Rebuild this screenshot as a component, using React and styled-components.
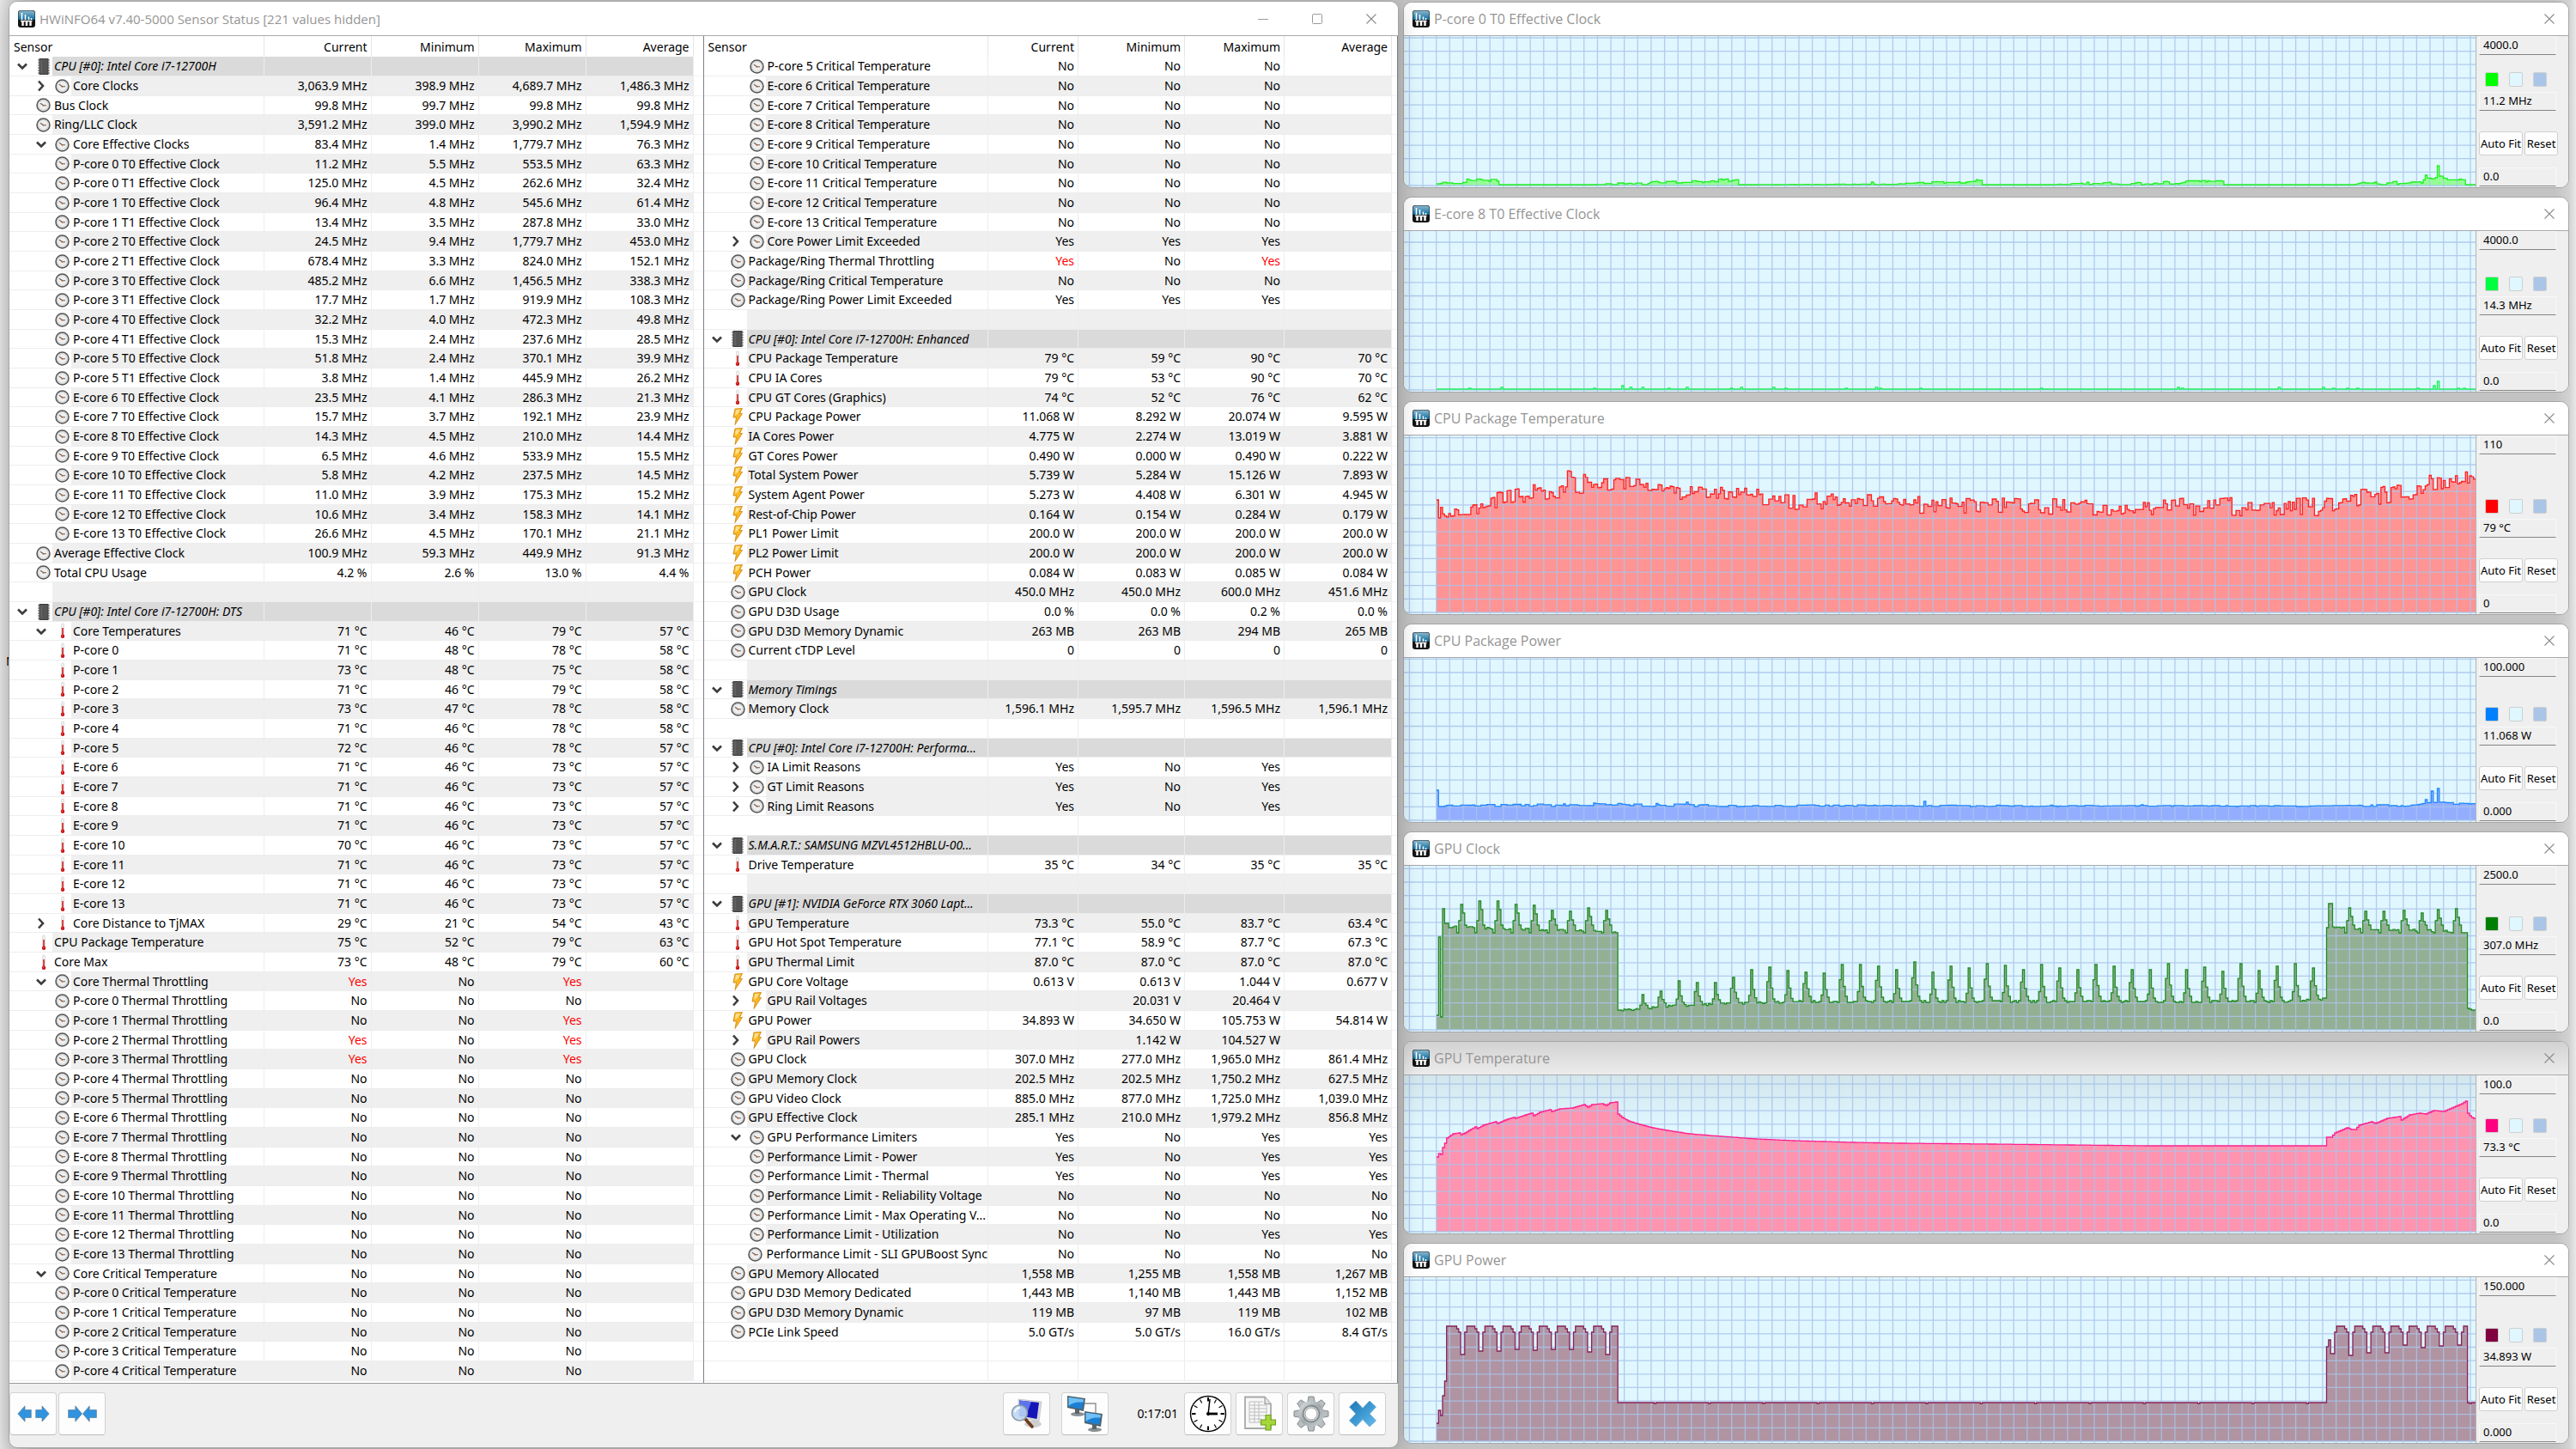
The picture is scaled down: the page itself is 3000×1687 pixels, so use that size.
import styled, { createGlobalStyle, css } from "styled-components";

const GlobalStyle = createGlobalStyle`
  * {
    box-sizing: border-box;
  }
  body {
    margin: 0;
    background: #e4e4e4;
    color: #000;
    font-family: "Noto Sans", Tahoma, sans-serif;
    font-size: 14px;
    line-height: 20px;
  }
  button,
  input {
    font: inherit;
    color: inherit;
    margin: 0;
  }
`;

const Desktop = styled.div`
  position: relative;
  min-height: 100vh;
  padding: 1px 8px 1px 10px;
  display: grid;
  grid-template-columns: 1619fr 1358fr;
  gap: 5px;
  align-items: start;
  background: linear-gradient(
    to right,
    #e6e6e6,
    #dadada 10px,
    #c3c3c3 40px,
    #c3c3c3 calc(100% - 24px),
    #d2d2d2 calc(100% - 8px),
    #e8e8e8
  );
`;
const DesktopLabel = styled.span`
  position: absolute;
  left: 7px;
  top: 760px;
`;

const Window = styled.section`
  position: relative;
  border: 1px solid #a6a6a6;
  border-radius: 10px;
  overflow: hidden;
  background: #efefef;
`;
const MainWindow = styled(Window)`
  z-index: 1;
  box-shadow: 0 4px 26px rgba(0, 0, 0, 0.22);
`;
const TitleBar = styled.header`
  height: ${(p) => p.$height}px;
  padding-left: 10px;
  display: flex;
  align-items: center;
  gap: 5px;
  background: ${(p) => (p.$shaded ? "linear-gradient(#d2d2d2, #ececec)" : "#fff")};
`;
const Title = styled.h1`
  flex: 1;
  margin: 0;
  font-family: "Open Sans", "Segoe UI", sans-serif;
  font-size: ${(p) => p.$size}px;
  font-weight: 400;
  line-height: 22px;
  color: #959595;
  white-space: nowrap;
`;
const CaptionButton = styled.button`
  width: ${(p) => p.$width}px;
  align-self: stretch;
  padding: 0;
  border: 0;
  background: none;
  display: flex;
  align-items: center;
  justify-content: center;
`;
const CaptionButtons = styled.div`
  display: flex;
  align-self: stretch;
`;

const Panes = styled.div`
  display: grid;
  grid-template-columns: 1fr 1fr;
  border-top: 1px solid #a9a9ad;
  border-bottom: 1px solid #98989e;
  background: #fff;
`;
const Pane = styled.div`
  padding-bottom: 2px;
  border-right: 1px solid #80808a;
`;
const Table = styled.table`
  width: 100%;
  table-layout: fixed;
  border-collapse: separate;
  border-spacing: 0;
`;
const Col = styled.col`
  width: ${(p) => p.$width}px;
`;
const Th = styled.th`
  height: 24px;
  padding: 2px 4px 0 5px;
  font-weight: 400;
  text-align: ${(p) => (p.$first ? "left" : "right")};
  border-right: 1px solid #e6e6e6;
`;

const rowBack = { dark: "#dadada", gray: "#efefef", white: "#fff" };

const Td = styled.td`
  height: 100%;
  padding: 0 4px 0 0;
  text-align: right;
  white-space: nowrap;
  color: ${(p) => (p.$alert ? "#f00" : "#000")};
  border-right: 1px solid #ededed;
  border-bottom: 1px solid #ededed;
`;
const SensorTd = styled.td`
  padding: 0;
  text-align: left;
  border-right: 1px solid #ededed;
  border-bottom: 1px solid #ededed;
`;
const EndTd = styled.td`
  padding: 0;
  border-bottom: 1px solid #f2f2f2;
`;
// every third row is one pixel shorter
const Tr = styled.tr`
  height: 23px;
  &:nth-child(3n) {
    height: 22px;
  }
  ${Td} {
    background: ${(p) => rowBack[p.$tone]};
  }
  ${SensorTd} {
    background: linear-gradient(
      to right,
      #fff ${(p) => p.$indent}px,
      ${(p) => rowBack[p.$tone]} ${(p) => p.$indent}px
    );
  }
`;
const Sensor = styled.div`
  display: flex;
  align-items: center;
  height: 20px;
  padding-left: ${(p) => (p.$level === 2 ? 28 : 6)}px;
  white-space: nowrap;
  font-style: ${(p) => (p.$group ? "italic" : "normal")};
`;
const Expander = styled.button`
  width: 18px;
  height: 18px;
  padding: 0;
  margin-right: 7px;
  border: 0;
  background: none;
  display: flex;
  align-items: center;
  justify-content: center;
`;
const ExpanderSpace = styled.span`
  width: 25px;
`;
const IconSlot = styled.span`
  width: 17px;
  height: 20px;
  margin-right: 4px;
  display: flex;
  align-items: center;
  justify-content: center;
`;

const Toolbar = styled.footer`
  display: flex;
  align-items: center;
  padding: 10px 14px 14px 0;
`;
const ToolGroup = styled.div`
  display: flex;
  align-items: center;
  gap: ${(p) => p.$gap}px;
`;
const ToolButton = styled.button`
  width: 55px;
  height: 50px;
  padding: 0;
  border: 1px solid #d2d2d2;
  border-bottom-color: #bdbdbd;
  border-radius: 4px;
  background: #fdfdfd;
  display: flex;
  align-items: center;
  justify-content: center;
`;
const Elapsed = styled.time`
  margin: 0 7px 0 33px;
`;
const Spacer = styled.div`
  flex: 1;
`;

const Charts = styled.div`
  padding-top: 1px;
  display: flex;
  flex-direction: column;
  gap: 10px;
`;
const ChartBody = styled.div`
  display: flex;
  height: ${(p) => p.$height}px;
  border-top: 1px solid #a9a9ad;
`;
const Plot = styled.div`
  flex: 1;
  min-width: 0;
  background: #e0f7ff;
  border-right: 1px solid #b5b5b5;
  svg {
    display: block;
    width: 100%;
    height: 100%;
  }
  ${(p) =>
    p.$shaded &&
    css`
      background: linear-gradient(#d2e6ec, #e0f7ff 60px);
    `}
`;
const Side = styled.div`
  width: 107px;
  padding: 0 0 1px 3px;
  display: flex;
  flex-direction: column;
  background: #efefef;
  font-size: 13px;
`;
const Field = styled.input`
  width: 90px;
  height: 22px;
  padding: 0 4px 3px;
  border: 1px solid #f8f8f8;
  border-bottom: 1px solid #858585;
  border-radius: 0;
  background: #efefef;
  outline: none;
`;
const Swatches = styled.div`
  display: flex;
  gap: 12px;
  margin: auto 0 6px 7px;
`;
const Swatch = styled.button`
  width: 16px;
  height: 17px;
  padding: 0;
  border: 1px solid #cfcfcf;
  border-radius: 2px;
  background: ${(p) => p.$color};
`;
const ChartActions = styled.div`
  display: flex;
  gap: 2px;
  margin: 24px 0 14px;
`;
const ChartButton = styled.button`
  width: ${(p) => p.$width}px;
  height: 28px;
  padding: 0;
  border: 1px solid #d0d0d0;
  border-radius: 3px;
  background: #fdfdfd;
  white-space: nowrap;
`;

const AppIcon = () => (
  <svg width="20" height="20" viewBox="0 0 20 20">
    <defs>
      <linearGradient id="appTop" x1="0" y1="0" x2="0" y2="1">
        <stop offset="0" stopColor="#8cb9cf" />
        <stop offset="1" stopColor="#0b6b9f" />
      </linearGradient>
    </defs>
    <rect width="20" height="20" rx="3" fill="#141414" />
    <path d="M.5 11V3.500a3 3 0 0 1 3-3h13a3 3 0 0 1 3 3V11z" fill="url(#appTop)" />
    <path d="M4.500 3v8M8.500 5v6M12.500 7.500V11M15.500 9v2" stroke="#fff" strokeWidth="1.600" />
    <path d="M3 12.500h13.500" stroke="#fff" strokeWidth="1.400" />
    <path d="M5.500 12v6M10 12v6M14.500 12v6" stroke="#fff" strokeWidth="2.400" />
  </svg>
);
const CloseIcon = () => (
  <svg width="12" height="12" viewBox="0 0 12 12" stroke="#8c8c8c" strokeWidth="1.100">
    <path d="M.5.5l11 11M11.500.5l-11 11" />
  </svg>
);
const MinimizeIcon = () => (
  <svg width="12" height="12" viewBox="0 0 12 12" stroke="#9a9a9a">
    <path d="M0 6.500h12" />
  </svg>
);
const MaximizeIcon = () => (
  <svg width="12" height="12" viewBox="0 0 12 12" stroke="#9a9a9a" fill="none">
    <rect x=".5" y=".5" width="11" height="11" rx="1" />
  </svg>
);
const Arrow = ({ open }) => (
  <svg width="14" height="14" viewBox="0 0 14 14" fill="none" stroke="#3c3c3c" strokeWidth="2.600">
    <path d={open ? "M2 4.500l5 5 5-5" : "M4 1.500l5 5.500-5 5.500"} />
  </svg>
);

const ClockIcon = () => (
  <svg width="17" height="17" viewBox="0 0 17 17">
    <circle cx="8.500" cy="8.500" r="7.500" fill="#e6e6e6" stroke="#545454" strokeWidth="1.500" />
    <circle cx="8.500" cy="8.500" r="5.800" fill="#efefef" stroke="#c4c4c4" strokeWidth=".8" />
    <path d="M5 6.200l3.500 2.600h3.500" fill="none" stroke="#6a5d55" strokeWidth="1.100" />
    <circle cx="8.500" cy="8.800" r="1" fill="#b5643c" />
  </svg>
);
const ThermoIcon = () => (
  <svg width="10" height="19" viewBox="0 0 10 19">
    <rect x="3.500" y=".8" width="3" height="14" rx="1.500" fill="#efefef" stroke="#cfcfcf" strokeWidth=".6" />
    <rect x="4.200" y="6" width="1.600" height="9" fill="#d42020" />
    <circle cx="5" cy="15.800" r="2.200" fill="#cc1010" />
    <circle cx="4.400" cy="15.200" r=".6" fill="#f08080" />
  </svg>
);
const BoltIcon = () => (
  <svg width="15" height="20" viewBox="0 0 15 20">
    <path d="M4 1l8.500-.5-3 6h3L4 19.500l1.500-8.500H2z" fill="#fbb823" stroke="#c9820e" strokeWidth=".8" />
    <path d="M5 2.200l5-.4-2.500 4.700L4 9z" fill="#ffe08a" />
  </svg>
);
const ChipIcon = () => (
  <svg width="16" height="19" viewBox="0 0 16 19">
    <path d="M1 2h14M1 5h14M1 8h14M1 11h14M1 14h14M1 17h14" stroke="#9a9a9a" strokeWidth="1.400" />
    <rect x="3" y=".5" width="10" height="18" fill="#555" stroke="#3e3e3e" />
    <path d="M5 2v15" stroke="#707070" />
  </svg>
);
const icons = { clock: ClockIcon, thermo: ThermoIcon, bolt: BoltIcon, chip: ChipIcon };

const ExpandIcon = () => (
  <svg width="42" height="20" viewBox="0 0 42 22" fill="#2f93e0" stroke="#5f7f99" strokeWidth=".8">
    <path d="M1 11L10 1v5h8v10h-8v5z" />
    <path d="M41 11L32 1v5h-8v10h8v5z" />
  </svg>
);
const CollapseIcon = () => (
  <svg width="38" height="20" viewBox="0 0 38 22" fill="#2f93e0" stroke="#5f7f99" strokeWidth=".8">
    <path d="M18.500 11L10 1v5H1v10h9v5z" />
    <path d="M19.500 11L28 1v5h9v10h-9v5z" />
  </svg>
);
const Screen = ({ x, y }) => (
  <g transform={`translate(${x} ${y})`}>
    <ellipse cx="12" cy="21.500" rx="8" ry="2.500" fill="#8b9094" />
    <path d="M9 15l5 1v5H9z" fill="#5d6468" />
    <path d="M0 0l21 3-2 15L0 14z" fill="#51626c" />
    <path d="M1.500 1.800l17.500 2.500-1.600 11.500L1.500 12.500z" fill="#1c7fd6" />
    <path d="M1.500 1.800l17.500 2.500-.6 3.500C10 7 5 9 1.500 12z" fill="#6fc0f5" />
  </g>
);
const FindIcon = () => (
  <svg width="38" height="38" viewBox="0 0 38 38">
    <ellipse cx="26" cy="31" rx="10" ry="4" fill="#cfcfcf" />
    <path d="M9 2l27 3-3 23-24-5z" fill="#d8d8dc" stroke="#b5b5b5" strokeWidth=".6" />
    <path d="M10 3.500l23 2.500-2.500 19L10 21z" fill="#1414b8" />
    <path d="M10 3.500l14 1.500-6 17-8-2z" fill="#5b74ee" />
    <path d="M17 25l8 9" stroke="#6b3a1c" strokeWidth="3.600" strokeLinecap="round" />
    <circle cx="10.500" cy="18" r="9" fill="#bcd6f3" fillOpacity=".85" stroke="#8d9aa6" strokeWidth="1.600" />
    <path d="M5 17a6 6 0 0 1 6-5" fill="none" stroke="#fff" strokeWidth="1.800" />
  </svg>
);
const NetworkIcon = () => (
  <svg width="44" height="42" viewBox="0 0 44 42">
    <path d="M20 9h14v13" fill="none" stroke="#8e8e8e" strokeWidth="1.400" />
    <Screen x={1} y={0} />
    <Screen x={21} y={18} />
  </svg>
);
const WallClockIcon = () => (
  <svg width="44" height="44" viewBox="0 0 44 44" stroke="#000">
    <circle cx="22" cy="22" r="20.500" fill="#fff" strokeWidth="1.400" />
    {[...Array(12)].map((_, i) => (
      <path
        key={i}
        d="M22 3v4.500"
        strokeWidth={i % 3 ? 1.2 : 2}
        transform={`rotate(${i * 30} 22 22)`}
      />
    ))}
    <path d="M22 23L24 5" strokeWidth="1.500" />
    <path d="M21 22h12" strokeWidth="2.800" />
    <circle cx="22" cy="22" r="1.600" />
  </svg>
);
const LogIcon = () => (
  <svg width="40" height="42" viewBox="0 0 40 42">
    <path d="M3 1.500h23l7 8V38H3z" fill="#f7f7f7" stroke="#a8a8a8" strokeWidth="1.800" />
    <path d="M26 1.500V9.500h7" fill="#e3e3e3" stroke="#a8a8a8" strokeWidth="1.400" />
    <path
      d="M8 7h16M8 11h20M8 15h20M8 19h20M8 23h20M8 27h14M8 31h14M8 7v24M14 7v24M19 7v24M28 11v10"
      stroke="#bcbcbc"
      fill="none"
    />
    <path
      d="M27 22.500h6v5.500h5.500v6H33V40h-6v-6h-5.500v-6H27z"
      fill="#a5d63a"
      stroke="#6fa01c"
      strokeWidth="1.100"
    />
  </svg>
);
const GearIcon = () => (
  <svg width="42" height="42" viewBox="0 0 42 42">
    <defs>
      <linearGradient id="gear" x1="0" y1="0" x2="1" y2="1">
        <stop offset="0" stopColor="#dfe3e4" />
        <stop offset=".5" stopColor="#a2a9ac" />
        <stop offset="1" stopColor="#ccd1d3" />
      </linearGradient>
    </defs>
    <g fill="#b9bfc1" stroke="#7b8184" strokeWidth=".9">
      {[...Array(8)].map((_, i) => (
        <path key={i} d="M16.500 9l1.500-8h6l1.500 8z" transform={`rotate(${i * 45} 21 21)`} />
      ))}
      <circle cx="21" cy="21" r="15" fill="url(#gear)" stroke="none" />
    </g>
    <circle cx="21" cy="21" r="9.500" fill="#d5d9da" stroke="#83898c" strokeWidth="1.800" />
    <circle cx="21" cy="21" r="7" fill="#fdfdfd" stroke="#9ba0a3" />
  </svg>
);
const ExitIcon = () => (
  <svg width="34" height="34" viewBox="0 0 34 34">
    <defs>
      <linearGradient id="exit" x1="0" y1="0" x2="1" y2="1">
        <stop offset="0" stopColor="#1b76b4" />
        <stop offset="1" stopColor="#62bdf0" />
      </linearGradient>
    </defs>
    <path
      d="M9 2l8 8.500L25 2l7.500 7L25 17l7.500 8-7.500 7-8-8.500L9 32l-7.500-7L9 17 1.500 9z"
      fill="url(#exit)"
      stroke="#6aa5cc"
      strokeWidth=".8"
    />
  </svg>
);

const group = (label) => ({ group: true, level: 0, icon: "chip", label, values: [], open: true });
const blank = { blank: true, level: 0, values: [] };
const row = (level, icon, label, values, open) => ({
  level,
  icon,
  label,
  open,
  values: values.split("|"),
});
const withUnit = (values, unit) =>
  values
    .split(" ")
    .map((v) => `${v} ${unit}`)
    .join("|");
const clock = (level, label, values, open) => row(level, "clock", label, withUnit(values, "MHz"), open);
const temp = (level, label, values, open) => row(level, "thermo", label, withUnit(values, "°C"), open);
const power = (label, values, unit = "W") => row(1, "bolt", label, withUnit(values, unit));
const flags = (level, label, values, open) => row(level, "clock", label, values, open);

const leftRows = [
  group("CPU [#0]: Intel Core i7-12700H"),
  clock(2, "Core Clocks", "3,063.9 398.9 4,689.7 1,486.3", false),
  clock(1, "Bus Clock", "99.8 99.7 99.8 99.8"),
  clock(1, "Ring/LLC Clock", "3,591.2 399.0 3,990.2 1,594.9"),
  clock(2, "Core Effective Clocks", "83.4 1.4 1,779.7 76.3", true),
  clock(2, "P-core 0 T0 Effective Clock", "11.2 5.5 553.5 63.3"),
  clock(2, "P-core 0 T1 Effective Clock", "125.0 4.5 262.6 32.4"),
  clock(2, "P-core 1 T0 Effective Clock", "96.4 4.8 545.6 61.4"),
  clock(2, "P-core 1 T1 Effective Clock", "13.4 3.5 287.8 33.0"),
  clock(2, "P-core 2 T0 Effective Clock", "24.5 9.4 1,779.7 453.0"),
  clock(2, "P-core 2 T1 Effective Clock", "678.4 3.3 824.0 152.1"),
  clock(2, "P-core 3 T0 Effective Clock", "485.2 6.6 1,456.5 338.3"),
  clock(2, "P-core 3 T1 Effective Clock", "17.7 1.7 919.9 108.3"),
  clock(2, "P-core 4 T0 Effective Clock", "32.2 4.0 472.3 49.8"),
  clock(2, "P-core 4 T1 Effective Clock", "15.3 2.4 237.6 28.5"),
  clock(2, "P-core 5 T0 Effective Clock", "51.8 2.4 370.1 39.9"),
  clock(2, "P-core 5 T1 Effective Clock", "3.8 1.4 445.9 26.2"),
  clock(2, "E-core 6 T0 Effective Clock", "23.5 4.1 286.3 21.3"),
  clock(2, "E-core 7 T0 Effective Clock", "15.7 3.7 192.1 23.9"),
  clock(2, "E-core 8 T0 Effective Clock", "14.3 4.5 210.0 14.4"),
  clock(2, "E-core 9 T0 Effective Clock", "6.5 4.6 533.9 15.5"),
  clock(2, "E-core 10 T0 Effective Clock", "5.8 4.2 237.5 14.5"),
  clock(2, "E-core 11 T0 Effective Clock", "11.0 3.9 175.3 15.2"),
  clock(2, "E-core 12 T0 Effective Clock", "10.6 3.4 158.3 14.1"),
  clock(2, "E-core 13 T0 Effective Clock", "26.6 4.5 170.1 21.1"),
  clock(1, "Average Effective Clock", "100.9 59.3 449.9 91.3"),
  row(1, "clock", "Total CPU Usage", "4.2 %|2.6 %|13.0 %|4.4 %"),
  blank,
  group("CPU [#0]: Intel Core i7-12700H: DTS"),
  temp(2, "Core Temperatures", "71 46 79 57", true),
  temp(2, "P-core 0", "71 48 78 58"),
  temp(2, "P-core 1", "73 48 75 58"),
  temp(2, "P-core 2", "71 46 79 58"),
  temp(2, "P-core 3", "73 47 78 58"),
  temp(2, "P-core 4", "71 46 78 58"),
  temp(2, "P-core 5", "72 46 78 57"),
  temp(2, "E-core 6", "71 46 73 57"),
  temp(2, "E-core 7", "71 46 73 57"),
  temp(2, "E-core 8", "71 46 73 57"),
  temp(2, "E-core 9", "71 46 73 57"),
  temp(2, "E-core 10", "70 46 73 57"),
  temp(2, "E-core 11", "71 46 73 57"),
  temp(2, "E-core 12", "71 46 73 57"),
  temp(2, "E-core 13", "71 46 73 57"),
  temp(2, "Core Distance to TjMAX", "29 21 54 43", false),
  temp(1, "CPU Package Temperature", "75 52 79 63"),
  temp(1, "Core Max", "73 48 79 60"),
  flags(2, "Core Thermal Throttling", "!Yes|No|!Yes|", true),
  flags(2, "P-core 0 Thermal Throttling", "No|No|No|"),
  flags(2, "P-core 1 Thermal Throttling", "No|No|!Yes|"),
  flags(2, "P-core 2 Thermal Throttling", "!Yes|No|!Yes|"),
  flags(2, "P-core 3 Thermal Throttling", "!Yes|No|!Yes|"),
  flags(2, "P-core 4 Thermal Throttling", "No|No|No|"),
  flags(2, "P-core 5 Thermal Throttling", "No|No|No|"),
  ...[6, 7, 8, 9, 10, 11, 12, 13].map((n) => flags(2, `E-core ${n} Thermal Throttling`, "No|No|No|")),
  flags(2, "Core Critical Temperature", "No|No|No|", true),
  ...[0, 1, 2, 3, 4].map((n) => flags(2, `P-core ${n} Critical Temperature`, "No|No|No|")),
];

const rightRows = [
  flags(2, "P-core 5 Critical Temperature", "No|No|No|"),
  ...[6, 7, 8, 9, 10, 11, 12, 13].map((n) => flags(2, `E-core ${n} Critical Temperature`, "No|No|No|")),
  flags(2, "Core Power Limit Exceeded", "Yes|Yes|Yes|", false),
  flags(1, "Package/Ring Thermal Throttling", "!Yes|No|!Yes|"),
  flags(1, "Package/Ring Critical Temperature", "No|No|No|"),
  flags(1, "Package/Ring Power Limit Exceeded", "Yes|Yes|Yes|"),
  blank,
  group("CPU [#0]: Intel Core i7-12700H: Enhanced"),
  temp(1, "CPU Package Temperature", "79 59 90 70"),
  temp(1, "CPU IA Cores", "79 53 90 70"),
  temp(1, "CPU GT Cores (Graphics)", "74 52 76 62"),
  power("CPU Package Power", "11.068 8.292 20.074 9.595"),
  power("IA Cores Power", "4.775 2.274 13.019 3.881"),
  power("GT Cores Power", "0.490 0.000 0.490 0.222"),
  power("Total System Power", "5.739 5.284 15.126 7.893"),
  power("System Agent Power", "5.273 4.408 6.301 4.945"),
  power("Rest-of-Chip Power", "0.164 0.154 0.284 0.179"),
  power("PL1 Power Limit", "200.0 200.0 200.0 200.0"),
  power("PL2 Power Limit", "200.0 200.0 200.0 200.0"),
  power("PCH Power", "0.084 0.083 0.085 0.084"),
  clock(1, "GPU Clock", "450.0 450.0 600.0 451.6"),
  row(1, "clock", "GPU D3D Usage", "0.0 %|0.0 %|0.2 %|0.0 %"),
  row(1, "clock", "GPU D3D Memory Dynamic", "263 MB|263 MB|294 MB|265 MB"),
  row(1, "clock", "Current cTDP Level", "0|0|0|0"),
  blank,
  group("Memory Timings"),
  clock(1, "Memory Clock", "1,596.1 1,595.7 1,596.5 1,596.1"),
  blank,
  group("CPU [#0]: Intel Core i7-12700H: Performa..."),
  flags(2, "IA Limit Reasons", "Yes|No|Yes|", false),
  flags(2, "GT Limit Reasons", "Yes|No|Yes|", false),
  flags(2, "Ring Limit Reasons", "Yes|No|Yes|", false),
  blank,
  group("S.M.A.R.T.: SAMSUNG MZVL4512HBLU-00..."),
  temp(1, "Drive Temperature", "35 34 35 35"),
  blank,
  group("GPU [#1]: NVIDIA GeForce RTX 3060 Lapt..."),
  temp(1, "GPU Temperature", "73.3 55.0 83.7 63.4"),
  temp(1, "GPU Hot Spot Temperature", "77.1 58.9 87.7 67.3"),
  temp(1, "GPU Thermal Limit", "87.0 87.0 87.0 87.0"),
  power("GPU Core Voltage", "0.613 0.613 1.044 0.677", "V"),
  row(2, "bolt", "GPU Rail Voltages", "|20.031 V|20.464 V|", false),
  power("GPU Power", "34.893 34.650 105.753 54.814"),
  row(2, "bolt", "GPU Rail Powers", "|1.142 W|104.527 W|", false),
  clock(1, "GPU Clock", "307.0 277.0 1,965.0 861.4"),
  clock(1, "GPU Memory Clock", "202.5 202.5 1,750.2 627.5"),
  clock(1, "GPU Video Clock", "885.0 877.0 1,725.0 1,039.0"),
  clock(1, "GPU Effective Clock", "285.1 210.0 1,979.2 856.8"),
  flags(2, "GPU Performance Limiters", "Yes|No|Yes|Yes", true),
  flags(2, "Performance Limit - Power", "Yes|No|Yes|Yes"),
  flags(2, "Performance Limit - Thermal", "Yes|No|Yes|Yes"),
  flags(2, "Performance Limit - Reliability Voltage", "No|No|No|No"),
  flags(2, "Performance Limit - Max Operating V...", "No|No|No|No"),
  flags(2, "Performance Limit - Utilization", "No|No|Yes|Yes"),
  flags(2, "Performance Limit - SLI GPUBoost Sync", "No|No|No|No"),
  row(1, "clock", "GPU Memory Allocated", "1,558 MB|1,255 MB|1,558 MB|1,267 MB"),
  row(1, "clock", "GPU D3D Memory Dedicated", "1,443 MB|1,140 MB|1,443 MB|1,152 MB"),
  row(1, "clock", "GPU D3D Memory Dynamic", "119 MB|97 MB|119 MB|102 MB"),
  row(1, "clock", "PCIe Link Speed", "5.0 GT/s|5.0 GT/s|16.0 GT/s|8.4 GT/s"),
  { ...blank, plain: true },
  { ...blank, plain: true },
];

const leftTone = (r, i) => (r.group ? "dark" : i % 2 ? "gray" : "white");
const rightTone = (r, i) => {
  if (r.group) return "dark";
  if (r.plain) return "white";
  // the banding flips after the performance group
  return (i < 38 ? i % 2 : (i + 1) % 2) ? "gray" : "white";
};

function SensorTable({ rows, widths, tone }) {
  return (
    <Table>
      <colgroup>
        <col />
        {widths.map((w, i) => (
          <Col key={i} $width={w} />
        ))}
      </colgroup>
      <thead>
        <tr>
          <Th $first>Sensor</Th>
          <Th>Current</Th>
          <Th>Minimum</Th>
          <Th>Maximum</Th>
          <Th>Average</Th>
          <td />
        </tr>
      </thead>
      <tbody>
        {rows.map((r, i) => {
          const Icon = icons[r.icon];
          return (
            <Tr key={i} $tone={tone(r, i)} $indent={r.level === 2 ? 72 : 50}>
              <SensorTd>
                {!r.blank && (
                  <Sensor $level={r.level} $group={r.group}>
                    {r.open === undefined ? (
                      <ExpanderSpace />
                    ) : (
                      <Expander aria-label={r.open ? "Collapse" : "Expand"}>
                        <Arrow open={r.open} />
                      </Expander>
                    )}
                    <IconSlot>
                      <Icon />
                    </IconSlot>
                    {r.label}
                  </Sensor>
                )}
              </SensorTd>
              {[0, 1, 2, 3].map((n) => {
                const value = r.values[n] || "";
                return (
                  <Td key={n} $alert={value[0] === "!"}>
                    {value.replace("!", "")}
                  </Td>
                );
              })}
              <EndTd />
            </Tr>
          );
        })}
      </tbody>
    </Table>
  );
}

const SAMPLES = 516;
const STEP = 2.345;
const START = 38;
const PLOT_WIDTH = 1248;
const CELL = 15.64;

const makeRandom = (seed) => () => {
  seed = (seed * 16807) % 2147483647;
  return seed / 2147483647;
};
// straight line through [index, value] points
const at = (points, i) => {
  const n = points.findIndex((p) => p[0] >= i);
  if (n === 0) return points[0][1];
  if (n < 0) return points[points.length - 1][1];
  const [x0, y0] = points[n - 1];
  const [x1, y1] = points[n];
  return y0 + ((y1 - y0) * (i - x0)) / (x1 - x0);
};
const series = (fn) => Array.from({ length: SAMPLES }, (_, i) => fn(i));

const bandSeries = (seed, low, high, hold, bias = 1.2) => {
  const random = makeRandom(seed);
  let level = 0;
  let left = 0;
  return series((i) => {
    if (left <= 0) {
      level = Math.pow(random(), bias);
      left = 1 + Math.floor(random() * hold);
    }
    left -= 1;
    const lo = at(low, i);
    return lo + (at(high, i) - lo) * level;
  });
};
const setPoints = (values, points) => {
  points.forEach(([i, v]) => {
    values[i] = v;
  });
  return values;
};

const pCore = setPoints(
  bandSeries(
    11,
    [[0, 2], [14, 2], [15, 5], [30, 5], [31, 1], [105, 1], [107, 3], [135, 3], [136, 4], [149, 5], [150, 1], [232, 1], [234, 2], [262, 3], [270, 5], [271, 1], [340, 1], [354, 1], [370, 2], [373, 4], [390, 4], [391, 1], [455, 1], [480, 1], [490, 4], [492, 6], [510, 6], [511, 1], [516, 1]],
    [[0, 7], [2, 4], [14, 5], [15, 10], [30, 9], [31, 1], [78, 1], [80, 3], [105, 3], [107, 5], [135, 6], [137, 8], [149, 9], [150, 1], [232, 2], [234, 4], [262, 5], [270, 8], [271, 1], [305, 1], [320, 4], [345, 5], [354, 2], [362, 5], [368, 2], [373, 6], [390, 6], [391, 1], [455, 1], [460, 4], [475, 5], [488, 8], [489, 3], [492, 14], [505, 11], [510, 8], [511, 1], [516, 1]],
    3
  ),
  [[216, 4], [491, 12], [497, 23], [498, 11]]
);
const eCore = setPoints(series(() => 1), [
  [16, 2], [32, 3], [78, 2], [92, 5], [96, 3], [102, 3], [115, 2], [124, 3], [146, 2], [151, 3], [167, 3], [173, 2], [203, 2], [218, 3], [220, 2], [240, 2], [300, 2], [368, 3], [370, 2], [418, 3], [440, 3], [445, 2], [452, 2], [457, 2], [487, 2], [495, 5], [497, 10], [507, 2], [510, 2],
]);
const cpuTemp = bandSeries(
  29,
  [[0, 131], [1, 110], [6, 110], [23, 114], [38, 123], [46, 127], [59, 133], [73, 134], [84, 140], [99, 143], [111, 140], [122, 130], [135, 133], [145, 125], [160, 120], [177, 118], [202, 122], [215, 123], [236, 124], [240, 115], [276, 114], [353, 112], [424, 112], [444, 110], [452, 115], [461, 122], [473, 127], [489, 133], [492, 142], [516, 146]],
  [[0, 131], [5, 112], [8, 127], [20, 131], [25, 137], [34, 143], [42, 147], [50, 150], [60, 157], [64, 166], [70, 162], [93, 161], [108, 157], [120, 150], [145, 147], [160, 143], [200, 138], [236, 137], [250, 133], [276, 134], [353, 130], [370, 134], [444, 134], [455, 137], [459, 147], [466, 144], [475, 153], [490, 146], [493, 161], [505, 155], [508, 168], [511, 165], [516, 157]],
  2,
  0.9
);
const cpuPower = setPoints(
  bandSeries(
    7,
    [[0, 16], [480, 16], [490, 18], [516, 19]],
    [[0, 18], [50, 19], [90, 20], [130, 19], [150, 18], [440, 17], [488, 19], [494, 23], [505, 21], [516, 20]],
    4
  ),
  [[0, 35], [78, 20], [124, 21], [242, 22], [350, 18], [491, 24], [494, 34], [497, 37]]
);

const lowSpikes = [
  41, 45, 57, 55, 55, 61, 70, 73, 69, 67, 66, 76, 76, 74, 70, 79, 67, 74, 72, 77, 75, 70, 76, 72, 70, 76, 74, 70, 70,
  77, 70, 73, 68, 77, 69, 74, 77, 72,
];
const highSpikes = {
  12: 146, 21: 150, 30: 150, 39: 146, 48: 145, 57: 139, 66: 138, 75: 142, 84: 139,
  453: 142, 461: 138, 470: 138, 480: 139, 489: 136, 497: 140, 506: 141,
};
const clockRandom = makeRandom(5);
const gpuClock = series((i) => {
  if (i < 7) return [17, 108, 15, 141, 124, 124, 119][i];
  const jitter = Math.floor(clockRandom() * 3);
  if (i < 90 || (i >= 442 && i < 512)) {
    if (i === 442) return 119;
    if (i === 443 || i === 444) return 147;
    if (highSpikes[i]) return highSpikes[i];
    if (highSpikes[i - 1]) return highSpikes[i - 1] - 10;
    if (highSpikes[i + 1]) return 127;
    if (highSpikes[i - 2]) return 122;
    if (highSpikes[i + 2]) return 113;
    return at([[7, 119], [30, 117], [60, 115], [90, 113], [442, 118], [460, 117], [512, 113]], i) + jitter;
  }
  if (i >= 512) return [25, 24, 23, 23][i - 512];
  const base = at([[90, 22], [102, 23], [110, 26], [140, 29], [180, 32], [420, 32], [441, 35]], i) + jitter;
  const k = Math.round((i - 102) / 9);
  const peak = lowSpikes[k];
  const offset = i - 102 - k * 9;
  if (!peak || k < 0) return base;
  if (offset === 0) return peak;
  if (offset === -1) return base + (peak - base) * (k % 2 ? 0.6 : 0.25);
  if (offset === 1) return base + (peak - base) * 0.42;
  if (offset === 2) return base + 5;
  return base;
});

// heating, cooling down, then heating again
const gpuTempPoints = [
  [0, 87], [1, 91], [2, 90], [3, 98], [4, 103], [5, 109], [8, 114], [11, 115], [12, 113], [14, 115], [16, 118],
  [19, 122], [20, 120], [23, 124], [29, 128], [30, 126], [35, 131], [38, 133], [39, 132], [44, 136], [47, 138],
  [48, 135], [51, 139], [56, 142], [57, 140], [61, 143], [67, 144], [73, 148], [75, 145], [77, 148], [82, 149],
  [84, 147], [86, 150], [89, 151], [90, 137], [92, 133], [95, 129], [99, 126], [107, 121], [114, 118], [125, 114],
  [141, 111], [158, 108], [177, 106], [206, 104], [230, 103], [276, 102], [353, 100], [441, 100], [442, 110],
  [444, 110], [446, 115], [449, 118], [452, 121], [454, 119], [456, 119], [458, 124], [464, 128], [466, 126],
  [472, 132], [478, 134], [479, 130], [483, 136], [488, 138], [491, 137], [495, 141], [500, 140], [504, 144],
  [508, 148], [509, 149], [511, 152], [512, 138], [513, 135], [514, 133], [515, 132],
];
const gpuTemp = series((i) => at(gpuTempPoints, i));

const powerDips = {
  12: 101, 21: 105, 30: 105, 39: 107, 48: 106, 57: 107, 66: 107, 75: 104, 84: 101,
  444: 102, 453: 100, 462: 103, 471: 103, 480: 112, 489: 109, 498: 111, 507: 112,
};
const gpuPower = series((i) => {
  if (i < 5) return [21, 36, 30, 53, 70][i];
  if (i < 90 || (i >= 442 && i < 512)) {
    if (i === 442) return 110;
    if (i === 443) return 118;
    if (powerDips[i]) return powerDips[i];
    if (powerDips[i - 1]) return powerDips[i - 1];
    if (powerDips[i + 1] || powerDips[i - 2]) return 127;
    if (powerDips[i + 2]) return 131;
    return 134;
  }
  return i % 27 === 0 ? 44 : 45;
});

function stepPath(values, base) {
  let d = `M${START} ${base - values[0]}`;
  values.forEach((v, i) => {
    d += `V${(base - v).toFixed(1)}H${(START + (i + 1) * STEP).toFixed(1)}`;
  });
  return d;
}

const charts = [
  { title: "P-core 0 T0 Effective Clock", max: "4000.0", min: "0.0", value: "11.2 MHz", height: 176, color: "#00ff00", line: "#22f022", fill: "#94ff94", data: pCore },
  { title: "E-core 8 T0 Effective Clock", max: "4000.0", min: "0.0", value: "14.3 MHz", height: 187, color: "#00ff40", line: "#22f060", fill: "#94ffb0", data: eCore },
  { title: "CPU Package Temperature", max: "110", min: "0", value: "79 °C", height: 208, color: "#ff0000", line: "#ff2020", fill: "#ff9494", data: cpuTemp },
  { title: "CPU Package Power", max: "100.000", min: "0.000", value: "11.068 W", height: 191, color: "#0080ff", line: "#2088ff", fill: "#94aeff", data: cpuPower },
  { title: "GPU Clock", max: "2500.0", min: "0.0", value: "307.0 MHz", height: 193, color: "#008000", line: "#228c22", fill: "#94b094", data: gpuClock },
  { title: "GPU Temperature", max: "100.0", min: "0.0", value: "73.3 °C", height: 184, color: "#ff0080", line: "#ff2090", fill: "#ff94b0", data: gpuTemp, shaded: true },
  { title: "GPU Power", max: "150.000", min: "0.000", value: "34.893 W", height: 193, color: "#800040", line: "#882255", fill: "#b094a2", data: gpuPower },
];

function ChartWindow({ title, max, min, value, height, color, line, fill, data, shaded }) {
  const base = height - 2;
  const path = stepPath(data, base);
  const columns = [...Array(80)].map((_, i) => `M${(6.4 + i * CELL).toFixed(1)} 0V${height}`);
  const lines = [...Array(14)].map((_, i) => `M0 ${(base - i * CELL).toFixed(1)}H${PLOT_WIDTH}`);
  return (
    <Window>
      <TitleBar $height={38} $shaded={shaded}>
        <AppIcon />
        <Title as="h2" $size={16}>
          {title}
        </Title>
        <CaptionButton $width={44} aria-label={`Close ${title}`}>
          <CloseIcon />
        </CaptionButton>
      </TitleBar>
      <ChartBody $height={height + 1}>
        <Plot $shaded={shaded}>
          <svg viewBox={`0 0 ${PLOT_WIDTH} ${height}`} preserveAspectRatio="none" aria-hidden="true">
            <path d={`${path}V${base}H${START}Z`} fill={fill} />
            <path d={[...columns, ...lines].join("")} stroke="#a9c3ea" strokeOpacity=".85" strokeWidth="1.300" fill="none" />
            <path d={path} stroke={line} strokeWidth="1.300" fill="none" />
          </svg>
        </Plot>
        <Side>
          <Field aria-label={`${title} scale maximum`} defaultValue={max} />
          <Swatches>
            <Swatch $color={color} aria-label="Graph color" />
            <Swatch $color="#e0f7ff" aria-label="Background color" />
            <Swatch $color="#aac5e8" aria-label="Grid color" />
          </Swatches>
          <Field aria-label={`${title} value`} value={value} readOnly />
          <ChartActions>
            <ChartButton $width={51}>Auto Fit</ChartButton>
            <ChartButton $width={39}>Reset</ChartButton>
          </ChartActions>
          <Field aria-label={`${title} scale minimum`} defaultValue={min} />
        </Side>
      </ChartBody>
    </Window>
  );
}

function App() {
  return (
    <>
      <GlobalStyle />
      <Desktop>
        <DesktopLabel>N</DesktopLabel>
        <MainWindow as="main">
          <TitleBar $height={39}>
            <AppIcon />
            <Title $size={15}>HWiNFO64 v7.40-5000 Sensor Status [221 values hidden]</Title>
            <CaptionButtons>
              <CaptionButton $width={63} aria-label="Minimize">
                <MinimizeIcon />
              </CaptionButton>
              <CaptionButton $width={63} aria-label="Maximize">
                <MaximizeIcon />
              </CaptionButton>
              <CaptionButton $width={63} aria-label="Close">
                <CloseIcon />
              </CaptionButton>
            </CaptionButtons>
          </TitleBar>
          <Panes>
            <Pane>
              <SensorTable rows={leftRows} widths={[125, 125, 125, 125, 11]} tone={leftTone} />
            </Pane>
            <Pane>
              <SensorTable rows={rightRows} widths={[105, 124, 116, 125, 6]} tone={rightTone} />
            </Pane>
          </Panes>
          <Toolbar>
            <ToolGroup $gap={2}>
              <ToolButton aria-label="Expand columns">
                <ExpandIcon />
              </ToolButton>
              <ToolButton aria-label="Shrink columns">
                <CollapseIcon />
              </ToolButton>
            </ToolGroup>
            <Spacer />
            <ToolGroup $gap={13}>
              <ToolButton aria-label="System summary">
                <FindIcon />
              </ToolButton>
              <ToolButton aria-label="Remote monitoring">
                <NetworkIcon />
              </ToolButton>
            </ToolGroup>
            <Elapsed>0:17:01</Elapsed>
            <ToolGroup $gap={5}>
              <ToolButton aria-label="Reset clock">
                <WallClockIcon />
              </ToolButton>
              <ToolButton aria-label="Start logging">
                <LogIcon />
              </ToolButton>
              <ToolButton aria-label="Settings">
                <GearIcon />
              </ToolButton>
              <ToolButton aria-label="Exit">
                <ExitIcon />
              </ToolButton>
            </ToolGroup>
          </Toolbar>
        </MainWindow>
        <Charts>
          {charts.map((c) => (
            <ChartWindow key={c.title} {...c} />
          ))}
        </Charts>
      </Desktop>
    </>
  );
}

export default App;
